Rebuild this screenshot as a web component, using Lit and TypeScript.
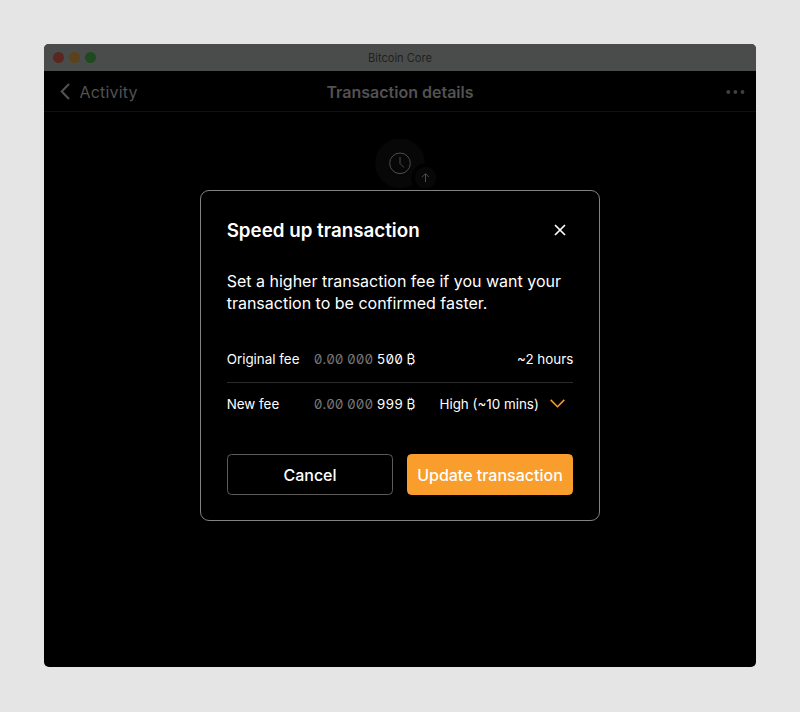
import { LitElement, html, css } from "lit";
import { customElement, property } from "lit/decorators.js";

@customElement("fee-amount")
class FeeAmount extends LitElement {
  @property() lead = "";
  @property() value = "";

  static styles = css`
    :host { display: block; white-space: nowrap; font-feature-settings: "tnum", "zero"; font-size: 13.4px; color: #fff; }
    .lead { color: #777; }
  `;

  render() {
    return html`<span class="lead">${this.lead}</span> <span>${this.value}</span> ₿`;
  }
}

@customElement("fee-dialog")
class FeeDialog extends LitElement {
  static styles = css`
    :host {
      display: flex; flex-direction: column; box-sizing: border-box;
      width: 400px; height: 331px; padding: 25.7px 25.7px 25px;
      border: 1px solid #828282; border-radius: 9px; background: #000; color: #fff;
    }
    .head { display: flex; justify-content: space-between; align-items: center; height: 27px; }
    .title { margin: 0; font-size: 18.75px; font-weight: 600; white-space: nowrap; }
    .close { display: block; margin-right: 7px; }
    .text { margin: 26px 0 0; font-size: 16px; line-height: 22.2px; white-space: nowrap; }
    .row { display: grid; grid-template-columns: 87.2px 1fr auto; align-items: center; height: 44.4px; font-size: 13.4px; padding-bottom: 2px; box-sizing: border-box; white-space: nowrap; }
    .rows { margin-top: 23.6px; }
    .row + .row { border-top: 1px solid #2b2b2b; }
    .choice { display: flex; align-items: center; gap: 11px; padding-right: 8.5px; }
    .actions { display: grid; grid-template-columns: 1fr 1fr; gap: 13.3px; margin-top: auto; height: 40.5px; }
    .btn { font: 500 16px Inter, sans-serif; color: #fff; border-radius: 4.5px; padding: 0; white-space: nowrap; background: #000; border: 1px solid #5c5c5c; }
    .primary { background: #f99d2d; border-color: #f99d2d; }
  `;

  render() {
    return html`
      <div class="head">
        <h2 class="title">Speed up transaction</h2>
        <svg class="close" width="12" height="12" viewBox="0 0 12 12" fill="none" stroke="#fff" stroke-width="1.7">
          <path d="M1 1 L11 11 M11 1 L1 11" />
        </svg>
      </div>
      <p class="text">Set a higher transaction fee if you want your<br />transaction to be confirmed faster.</p>
      <div class="rows">
        <div class="row">
          <span>Original fee</span>
          <fee-amount lead="0.00 000" value="500"></fee-amount>
          <span>~2 hours</span>
        </div>
        <div class="row">
          <span>New fee</span>
          <fee-amount lead="0.00 000" value="999"></fee-amount>
          <span class="choice">High (~10 mins)
            <svg width="15" height="9" viewBox="0 0 15 9" fill="none" stroke="#f99d2d" stroke-width="1.5">
              <path d="M.7 .9 L7.5 7.7 L14.3 .9" />
            </svg>
          </span>
        </div>
      </div>
      <div class="actions">
        <button class="btn">Cancel</button>
        <button class="btn primary">Update transaction</button>
      </div>
    `;
  }
}

@customElement("app-root")
class AppRoot extends LitElement {
  static styles = css`
    :host { display: block; box-sizing: border-box; height: 712px; padding: 44.4px; overflow: hidden; background: #e5e5e5; font-family: Inter, sans-serif; }
    .window { position: relative; width: 711.2px; height: 622.3px; border-radius: 5px; background: #000; overflow: hidden; }
    .bar { display: grid; grid-template-columns: 1fr auto 1fr; align-items: center; height: 26.6px; background: #4a4c4b; color: #202020; font-size: 11.1px; }
    .lights { display: flex; gap: 5px; padding-left: 8.6px; }
    .light { width: 11px; height: 11px; border-radius: 50%; }
    .red { background: #592622; }
    .yellow { background: #5c421a; }
    .green { background: #1f4a20; }
    .nav { display: grid; grid-template-columns: 1fr auto 1fr; align-items: center; height: 41px; padding-top: 2px; box-sizing: border-box; border-bottom: 1px solid #101010; color: #525252; font-size: 16px; }
    .back { display: flex; align-items: center; gap: 9.5px; padding-left: 15.5px; letter-spacing: .2px; }
    .heading { font-weight: 600; }
    .more { justify-self: end; margin-right: 11px; }
    .status { display: block; margin: 27px auto 0; }
    .dialog { position: absolute; left: 155.6px; top: 145.6px; }
  `;

  render() {
    return html`
      <div class="window">
        <div class="bar">
          <div class="lights">
            <i class="light red"></i><i class="light yellow"></i><i class="light green"></i>
          </div>
          <span>Bitcoin Core</span>
        </div>
        <div class="nav">
          <div class="back">
            <svg width="10" height="17" viewBox="0 0 10 17" fill="none" stroke="#525252" stroke-width="2">
              <path d="M9 1 L1.7 8.5 L9 16" />
            </svg>
            <span>Activity</span>
          </div>
          <span class="heading">Transaction details</span>
          <svg class="more" width="19" height="4" viewBox="0 0 19 4" fill="#404040">
            <circle cx="2.3" cy="2" r="1.9" /><circle cx="9.4" cy="2" r="1.9" /><circle cx="16.5" cy="2" r="1.9" />
          </svg>
        </div>
        <svg class="status" width="74" height="54" viewBox="0 0 74 54" fill="none">
          <circle cx="37" cy="24.3" r="24.8" fill="#070707" />
          <circle cx="37" cy="24.3" r="10.3" stroke="#4d4d4d" />
          <path d="M37 18 V24.5 L41 28.5" stroke="#4d4d4d" />
          <circle cx="62.5" cy="38.7" r="14" fill="#000" />
          <circle cx="62.5" cy="38.7" r="10.7" fill="#070707" />
          <path d="M62.5 43 V34.8 M59 38.2 L62.5 34.7 L66 38.2" stroke="#4d4d4d" />
        </svg>
        <fee-dialog class="dialog"></fee-dialog>
      </div>
    `;
  }
}
